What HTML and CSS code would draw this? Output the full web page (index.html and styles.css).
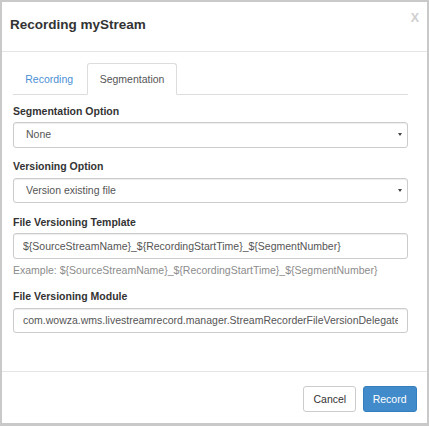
FILE: index.html
```html
<!DOCTYPE html>
<html>
<head>
<meta charset="utf-8">
<link rel="stylesheet" href="styles.css">
</head>
<body>
<div class="modal">
  <div class="modal-header">
    <h4 class="modal-title">Recording myStream</h4>
    <span class="close">X</span>
  </div>
  <div class="modal-body">
    <ul class="nav-tabs">
      <li class="tab"><a>Recording</a></li>
      <li class="tab active"><a>Segmentation</a></li>
    </ul>
    <div class="tab-content">
      <div class="form-group">
        <label>Segmentation Option</label>
        <div class="select-wrap">
          <select class="form-control select"><option>None</option></select>
        </div>
      </div>
      <div class="form-group">
        <label>Versioning Option</label>
        <div class="select-wrap">
          <select class="form-control select"><option>Version existing file</option></select>
        </div>
      </div>
      <div class="form-group">
        <label>File Versioning Template</label>
        <input class="form-control" type="text" value="${SourceStreamName}_${RecordingStartTime}_${SegmentNumber}">
        <p class="help-block">Example: ${SourceStreamName}_${RecordingStartTime}_${SegmentNumber}</p>
      </div>
      <div class="form-group">
        <label>File Versioning Module</label>
        <input class="form-control" type="text" value="com.wowza.wms.livestreamrecord.manager.StreamRecorderFileVersionDelegate">
      </div>
    </div>
  </div>
  <div class="modal-footer">
    <button class="btn btn-default">Cancel</button>
    <button class="btn btn-primary">Record</button>
  </div>
</div>
</body>
</html>
```
FILE: styles.css
```css
* { box-sizing: border-box; }
html, body { margin: 0; padding: 0; }
body {
  background: #c9c9c9;
  padding: 2px 2px 3px 2px;
  font-family: "Liberation Sans", Arial, sans-serif;
  font-size: 10.5px;
  line-height: 15px;
  color: #333;
}
.modal {
  background: #fff;
  width: 425px;
  height: 421px;
  display: flex;
  flex-direction: column;
  position: relative;
}
.modal-header {
  height: 50px;
  padding: 14.5px 8px 0 8px;
  border-bottom: 1px solid #e5e5e5;
}
.modal-title {
  margin: 0;
  font-size: 13.5px;
  line-height: 15px;
  font-weight: bold;
  color: #333;
}
.close {
  position: absolute;
  top: 10px;
  right: 8px;
  font-size: 12.5px;
  font-weight: bold;
  line-height: 12px;
  color: #cfcfcf;
}
.modal-body {
  flex: 1;
  padding: 11px 19px 0 11px;
}
.nav-tabs {
  list-style: none;
  margin: 0;
  padding: 0;
  display: flex;
  border-bottom: 1px solid #ddd;
}
.tab {
  margin-right: 2px;
  margin-bottom: -1px;
}
.tab a {
  display: block;
  padding: 7.5px 11.25px;
  line-height: 15px;
  border: 1px solid transparent;
  border-radius: 3px 3px 0 0;
  color: #4a90d4;
}
.tab.active a {
  color: #555;
  background: #fff;
  border-color: #ddd #ddd transparent #ddd;
}
.tab-content {
  padding-top: 8.5px;
}
.form-group {
  margin-bottom: 11.25px;
}
label {
  display: block;
  font-weight: bold;
  margin-bottom: 3.75px;
  line-height: 15px;
}
.form-control {
  display: block;
  width: 100%;
  height: 25.5px;
  padding: 4.5px 9px;
  font-family: "Liberation Sans", Arial, sans-serif;
  font-size: 10.5px;
  line-height: 15px;
  color: #555;
  background: #fff;
  border: 1px solid #ccc;
  border-radius: 3px;
  box-shadow: inset 0 1px 1px rgba(0,0,0,0.075);
  outline: none;
  margin: 0;
}
.select {
  appearance: none;
  -webkit-appearance: none;
  padding-left: 12px;
  padding-top: 3.5px;
}
.select-wrap {
  position: relative;
}
.select-wrap::after {
  content: "";
  position: absolute;
  right: 6.5px;
  top: 11px;
  border-left: 2px solid transparent;
  border-right: 2px solid transparent;
  border-top: 3px solid #444;
}
.help-block {
  margin: 3.75px 0 0 0;
  color: #8c8c8c;
  line-height: 15px;
}
.modal-footer {
  border-top: 1px solid #e5e5e5;
  padding: 14px 10.5px 11px 0;
  display: flex;
  justify-content: flex-end;
  gap: 6.5px;
}
.btn {
  font-family: "Liberation Sans", Arial, sans-serif;
  font-size: 10.5px;
  line-height: 15px;
  padding: 4.5px 9px;
  border: 1px solid transparent;
  border-radius: 3px;
  height: 26px;
  margin: 0;
}
.btn-default {
  background: #fff;
  color: #333;
  border-color: #ccc;
}
.btn-primary {
  background: #428bca;
  color: #fff;
  border-color: #357ebd;
}
```
